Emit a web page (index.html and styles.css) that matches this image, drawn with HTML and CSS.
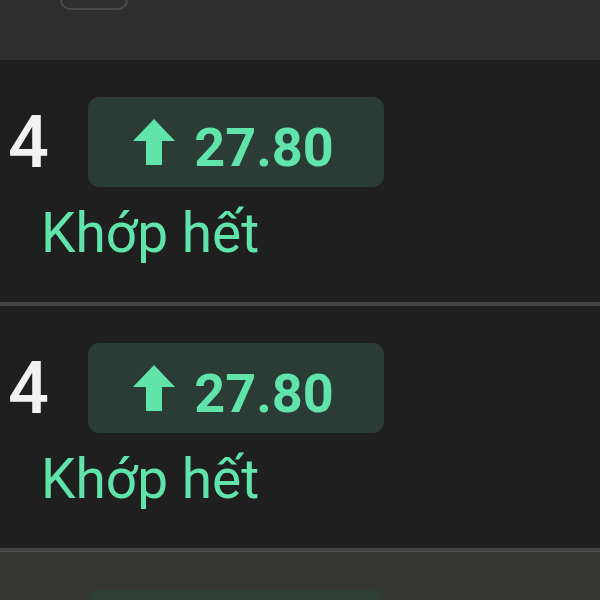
FILE: index.html
```html
<!DOCTYPE html>
<html lang="vi">
<head>
    <meta charset="UTF-8">
    <meta name="viewport" content="width=device-width, initial-scale=1.0">
    <title>Lệnh khớp</title>
    <link rel="stylesheet" href="styles.css">
</head>
<body>
    <div class="toolbar">
        <div class="toolbar-btn"></div>
    </div>

    <div class="order-row">
        <div class="order-line">
            <span class="qty">4</span>
            <div class="price-badge">
                <svg class="arrow" width="42" height="46" viewBox="0 0 42 46">
                    <path d="M21 0 L42 22 L29 22 L29 46 L13 46 L13 22 L0 22 Z" fill="#60e4aa"/>
                </svg>
                <span class="price">27.80</span>
            </div>
        </div>
        <div class="status">Khớp hết</div>
    </div>

    <div class="order-row">
        <div class="order-line">
            <span class="qty">4</span>
            <div class="price-badge">
                <svg class="arrow" width="42" height="46" viewBox="0 0 42 46">
                    <path d="M21 0 L42 22 L29 22 L29 46 L13 46 L13 22 L0 22 Z" fill="#60e4aa"/>
                </svg>
                <span class="price">27.80</span>
            </div>
        </div>
        <div class="status">Khớp hết</div>
    </div>

    <!-- next row, scrolled mostly out of view -->
    <div class="order-row selected">
        <div class="order-line">
            <span class="qty"></span>
            <div class="price-badge"></div>
        </div>
    </div>
</body>
</html>
```

FILE: styles.css
```css
body {
    margin: 0;
    background-color: #1f1f1f;
    font-family: Roboto, "Noto Sans", Arial, sans-serif;
    overflow: hidden;
}
.toolbar {
    height: 60px;
    background-color: #2e2e2e;
    overflow: hidden;
}
.toolbar-btn {
    width: 64px;
    height: 40px;
    margin-top: -34px;
    margin-left: 60px;
    border: 2px solid #4a4a4a;
    border-radius: 10px;
}
.order-row {
    padding: 37px 0 36px;
    border-bottom: 4px solid #444444;
}
.order-row.selected {
    background-color: #353532;
    border-top: 1px solid #505050;
    margin-top: -1px;
    padding-top: 38px;
}
.order-line {
    display: flex;
    align-items: center;
}
.qty {
    width: 80px;
    padding-left: 8px;
    font-size: 72px;
    font-weight: 500;
    color: #f2f2f2;
}
.price-badge {
    display: flex;
    align-items: center;
    justify-content: center;
    gap: 19px;
    box-sizing: border-box;
    width: 296px;
    height: 90px;
    padding-right: 5px;
    background-color: #2b3b35;
    border-radius: 11px;
}
.selected .price-badge {
    background-color: #2e3d36;
}
.arrow {
    display: block;
}
.price {
    padding-top: 10px;
    font-size: 54px;
    font-weight: 700;
    color: #60e4aa;
}
.status {
    margin-top: 13px;
    padding-left: 41px;
    font-size: 55px;
    line-height: 66px;
    color: #60e4aa;
}
```
